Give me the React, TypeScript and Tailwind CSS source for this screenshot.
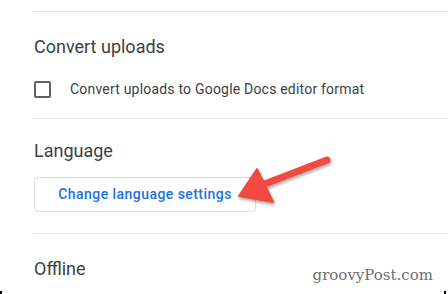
import React from 'react';

const font = { fontFamily: 'Roboto, "Noto Sans", sans-serif' };

function Arrow() {
  // red pointer arrow drawn over the screenshot
  return (
    <svg className="absolute left-0 top-0 pointer-events-none" width="448" height="294" viewBox="0 0 448 294">
      <defs>
        <filter id="sh" x="-20%" y="-20%" width="140%" height="140%">
          <feDropShadow dx="1" dy="2" stdDeviation="1.5" floodColor="#000" floodOpacity="0.35" />
        </filter>
      </defs>
      <g filter="url(#sh)">
        <line x1="327" y1="160" x2="262" y2="185" stroke="#ef4b3f" strokeWidth="7" strokeLinecap="round" />
        <path d="M239 196 L257 169 L264 183 L273 202 Z" fill="#ef4b3f" stroke="#ef4b3f" strokeWidth="2" strokeLinejoin="round" />
      </g>
    </svg>
  );
}

export default function App() {
  return (
    <div className="relative w-[448px] h-[294px] bg-white overflow-hidden" style={font}>
      <div className="pl-[33px] pt-[11px]">
        <div className="h-px bg-[#e3e3e3]" />

        <div className="pt-[23px] pb-[19px]">
          <h2 className="text-[18px] leading-[24px] text-[#3c4043] pl-[1px]">Convert uploads</h2>
          <label className="flex items-center mt-[20px] h-[20px]">
            <span className="w-[17px] h-[17px] border-2 border-[#5f6368] rounded-[2px] ml-[1px] shrink-0" />
            <span className="ml-[19px] text-[14px] tracking-[0.2px] text-[#3c4043]">Convert uploads to Google Docs editor format</span>
          </label>
        </div>

        <div className="h-px bg-[#e3e3e3]" />

        <div className="pt-[20px] pb-[21px]">
          <h2 className="text-[18px] leading-[24px] text-[#3c4043] pl-[1px]">Language</h2>
          <button className="mt-[14px] ml-[1px] w-[222px] h-[35px] border border-[#dadce0] rounded-[4px] text-[14px] font-medium text-[#1a73e8] tracking-[0.45px]">
            Change language settings
          </button>
        </div>

        <div className="h-px bg-[#e3e3e3]" />

        <div className="pt-[23px]">
          <h2 className="text-[18px] leading-[24px] text-[#3c4043] pl-[1px]">Offline</h2>
        </div>
      </div>

      <Arrow />

      <span className="absolute right-[15px] bottom-[8px] text-[15px] text-[#6f6f6f]" style={{ fontFamily: '"DejaVu Serif", serif' }}>
        groovyPost.com
      </span>
      <span className="absolute left-0 bottom-0 w-[2px] h-[3px] bg-black" />
      <span className="absolute right-[2px] bottom-0 w-[2px] h-[3px] bg-black" />
    </div>
  );
}
